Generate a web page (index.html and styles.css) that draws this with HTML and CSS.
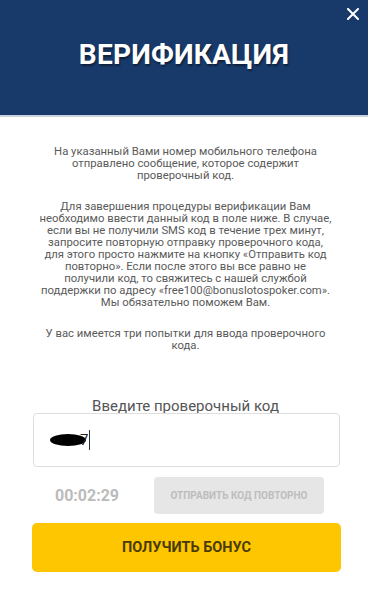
FILE: index.html
```html
<!DOCTYPE html>
<html lang="ru">
<head>
<meta charset="utf-8">
<link rel="stylesheet" href="styles.css">
</head>
<body>
<div class="modal">
  <header class="head">
    <h1 class="title">ВЕРИФИКАЦИЯ</h1>
    <svg class="close" width="12" height="12" viewBox="0 0 12 12"><path d="M1 1L11 11M11 1L1 11" stroke="#fff" stroke-width="2" stroke-linecap="square"/></svg>
  </header>
  <main class="content">
    <p class="txt p1">На указанный Вами номер мобильного телефона<br>отправлено сообщение, которое содержит<br>проверочный код.</p>
    <p class="txt p2">Для завершения процедуры верификации Вам<br>необходимо ввести данный код в поле ниже. В случае,<br>если вы не получили SMS код в течение трех минут,<br>запросите повторную отправку проверочного кода,<br>для этого просто нажмите на кнопку «Отправить код<br>повторно». Если после этого вы все равно не<br>получили код, то свяжитесь с нашей службой<br>поддержки по адресу «free100@bonuslotospoker.com».<br>Мы обязательно поможем Вам.</p>
    <p class="txt p3">У вас имеется три попытки для ввода проверочного<br>кода.</p>
    <div class="label">Введите проверочный код</div>
    <div class="input">
      <span class="blob"></span><span class="seven">7</span><span class="caret"></span>
    </div>
    <div class="row">
      <div class="timer">00:02:29</div>
      <div class="resend">ОТПРАВИТЬ КОД ПОВТОРНО</div>
    </div>
    <div class="bonus">ПОЛУЧИТЬ БОНУС</div>
  </main>
</div>
</body>
</html>
```

FILE: styles.css
```css
html, body {
  margin: 0;
  padding: 0;
  background: #fff;
}
body {
  font-family: Roboto, "Liberation Sans", sans-serif;
}
.modal {
  width: 368px;
  height: 600px;
  overflow: hidden;
}
.head {
  position: relative;
  height: 115px;
  background: #183a6b;
  border-bottom: 2px solid #c9d1dd;
  display: flex;
  align-items: center;
  justify-content: center;
}
.title {
  margin: 0;
  color: #fff;
  font-family: Roboto, "Liberation Sans", sans-serif;
  font-weight: 700;
  font-size: 28px;
  letter-spacing: 0.2px;
  text-shadow: 1px 2px 2px rgba(0, 0, 0, 0.45);
  padding-bottom: 7px;
}
.close {
  position: absolute;
  right: 9px;
  top: 8px;
}
.content {
  display: flex;
  flex-direction: column;
  padding: 0 30px 0 33px;
}
.txt {
  margin: 0;
  text-align: center;
  color: #5a5a5a;
  font-size: 11.3px;
  line-height: 12px;
}
.p1 { margin-top: 29px; }
.p2 { margin-top: 19px; }
.p3 { margin-top: 19px; }
.label {
  margin-top: 45px;
  text-align: center;
  color: #555;
  font-size: 15px;
  line-height: 18px;
}
.input {
  margin-top: -2px;
  height: 54px;
  border: 1px solid #dedede;
  border-radius: 4px;
  box-sizing: border-box;
  display: flex;
  align-items: center;
  padding-left: 16px;
  margin-right: -2px;
}
.blob {
  width: 36px;
  height: 12px;
  background: #000;
  border-radius: 50%;
}
.seven {
  font-size: 15px;
  color: #222;
  margin-left: -6px;
  line-height: 18px;
}
.caret {
  width: 1px;
  height: 20px;
  background: #333;
  margin-left: 1px;
}
.row {
  margin-top: 10px;
  display: flex;
  align-items: center;
  height: 37px;
}
.timer {
  width: 108px;
  text-align: center;
  color: #bbb;
  font-weight: 700;
  font-size: 16px;
}
.resend {
  margin-left: 13px;
  width: 170px;
  height: 37px;
  background: #e6e6e6;
  border-radius: 4px;
  display: flex;
  align-items: center;
  justify-content: center;
  color: #bdbdbd;
  font-weight: 700;
  font-size: 10px;
}
.bonus {
  margin-top: 9px;
  margin-left: -1px;
  margin-right: -3px;
  height: 49px;
  background: #fdc600;
  border-radius: 5px;
  display: flex;
  align-items: center;
  justify-content: center;
  color: #4a3b05;
  font-weight: 700;
  font-size: 14.5px;
}
```
